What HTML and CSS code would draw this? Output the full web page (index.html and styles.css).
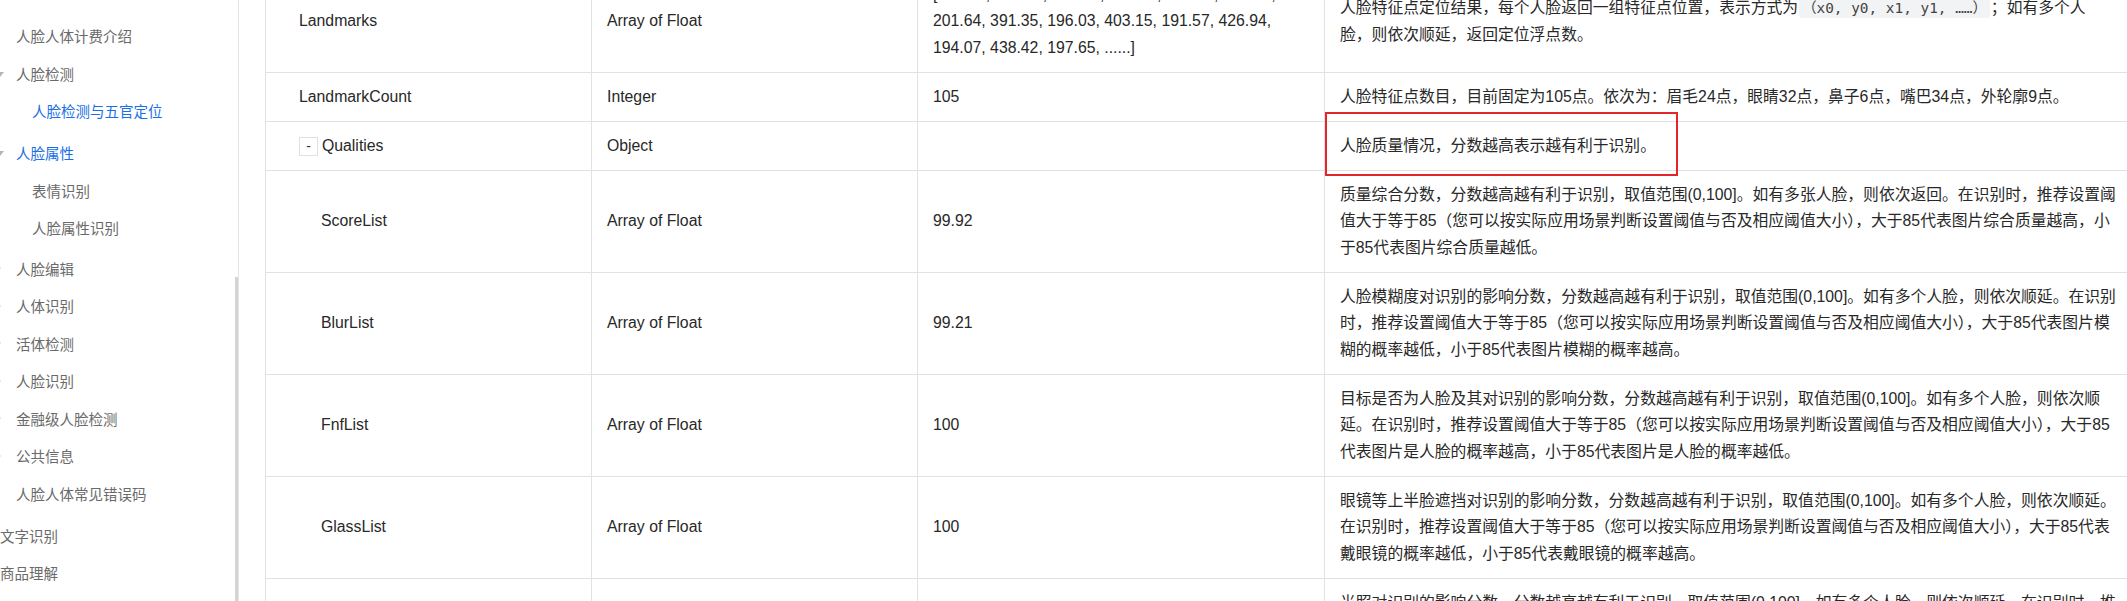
FILE: index.html
```html
<!DOCTYPE html>
<html lang="zh-CN">
<head>
<meta charset="utf-8">
<title>人脸检测与五官定位</title>
<link rel="stylesheet" href="styles.css">
</head>
<body>
<div class="page">
  <aside class="sidebar">
    <ul class="nav">
      <li class="nav-item l2"><span class="caret"></span><span>人脸人体计费介绍</span></li>
      <li class="nav-item l2"><span class="caret down"></span><span>人脸检测</span></li>
      <li class="nav-item l3 active group-end"><span>人脸检测与五官定位</span></li>
      <li class="nav-item l2 active"><span class="caret down"></span><span>人脸属性</span></li>
      <li class="nav-item l3"><span>表情识别</span></li>
      <li class="nav-item l3 group-end-s"><span>人脸属性识别</span></li>
      <li class="nav-item l2"><span class="caret right"></span><span>人脸编辑</span></li>
      <li class="nav-item l2"><span class="caret right"></span><span>人体识别</span></li>
      <li class="nav-item l2"><span class="caret right"></span><span>活体检测</span></li>
      <li class="nav-item l2"><span class="caret right"></span><span>人脸识别</span></li>
      <li class="nav-item l2"><span class="caret right"></span><span>金融级人脸检测</span></li>
      <li class="nav-item l2"><span class="caret right"></span><span>公共信息</span></li>
      <li class="nav-item l2 group-end"><span class="caret"></span><span>人脸人体常见错误码</span></li>
      <li class="nav-item l1"><span>文字识别</span></li>
      <li class="nav-item l1"><span>商品理解</span></li>
    </ul>
    <div class="scroll-thumb"></div>
  </aside>

  <main class="content">
    <div class="params">
      <div class="cell name first">Landmarks</div>
      <div class="cell">Array of Float</div>
      <div class="cell"><div class="text">[195.82, 381.64, 199.37, 394.15, 203.26, 407.83,<br>201.64, 391.35, 196.03, 403.15, 191.57, 426.94,<br>194.07, 438.42, 197.65, ......]</div></div>
      <div class="cell"><div class="text">人脸特征点定位结果，每个人脸返回一组特征点位置，表示方式为<code class="code">（x0, y0, x1, y1, ……）</code>；如有多个人<br>脸，则依次顺延，返回定位浮点数。</div></div>

      <div class="cell name first">LandmarkCount</div>
      <div class="cell">Integer</div>
      <div class="cell">105</div>
      <div class="cell"><div class="text">人脸特征点数目，目前固定为105点。依次为：眉毛24点，眼睛32点，鼻子6点，嘴巴34点，外轮廓9点。</div></div>

      <div class="cell name first toggle-cell"><span class="toggle">-</span><span>Qualities</span></div>
      <div class="cell">Object</div>
      <div class="cell"></div>
      <div class="cell marked"><div class="text">人脸质量情况，分数越高表示越有利于识别。</div><span class="mark-box"></span></div>

      <div class="cell name child first">ScoreList</div>
      <div class="cell">Array of Float</div>
      <div class="cell">99.92</div>
      <div class="cell"><div class="text">质量综合分数，分数越高越有利于识别，取值范围(0,100]。如有多张人脸，则依次返回。在识别时，推荐设置阈<br>值大于等于85（您可以按实际应用场景判断设置阈值与否及相应阈值大小），大于85代表图片综合质量越高，小<br>于85代表图片综合质量越低。</div></div>

      <div class="cell name child first">BlurList</div>
      <div class="cell">Array of Float</div>
      <div class="cell">99.21</div>
      <div class="cell"><div class="text">人脸模糊度对识别的影响分数，分数越高越有利于识别，取值范围(0,100]。如有多个人脸，则依次顺延。在识别<br>时，推荐设置阈值大于等于85（您可以按实际应用场景判断设置阈值与否及相应阈值大小），大于85代表图片模<br>糊的概率越低，小于85代表图片模糊的概率越高。</div></div>

      <div class="cell name child first">FnfList</div>
      <div class="cell">Array of Float</div>
      <div class="cell">100</div>
      <div class="cell"><div class="text">目标是否为人脸及其对识别的影响分数，分数越高越有利于识别，取值范围(0,100]。如有多个人脸，则依次顺<br>延。在识别时，推荐设置阈值大于等于85（您可以按实际应用场景判断设置阈值与否及相应阈值大小），大于85<br>代表图片是人脸的概率越高，小于85代表图片是人脸的概率越低。</div></div>

      <div class="cell name child first">GlassList</div>
      <div class="cell">Array of Float</div>
      <div class="cell">100</div>
      <div class="cell"><div class="text">眼镜等上半脸遮挡对识别的影响分数，分数越高越有利于识别，取值范围(0,100]。如有多个人脸，则依次顺延。<br>在识别时，推荐设置阈值大于等于85（您可以按实际应用场景判断设置阈值与否及相应阈值大小），大于85代表<br>戴眼镜的概率越低，小于85代表戴眼镜的概率越高。</div></div>

      <div class="cell name child first">IlluList</div>
      <div class="cell">Array of Float</div>
      <div class="cell">100</div>
      <div class="cell"><div class="text">光照对识别的影响分数，分数越高越有利于识别，取值范围(0,100]。如有多个人脸，则依次顺延。在识别时，推<br>荐设置阈值大于等于85（您可以按实际应用场景判断设置阈值与否及相应阈值大小），大于85代表图片光照越<br>好，小于85代表图片光照越差。</div></div>
    </div>
  </main>
</div>
</body>
</html>
```

FILE: styles.css
```css
* {
  box-sizing: border-box;
}

html, body {
  margin: 0;
  padding: 0;
  background: #ffffff;
  overflow: hidden;
}

body {
  width: 2127px;
  height: 601px;
  font-family: "Liberation Sans", "Noto Sans CJK SC", sans-serif;
}

.page {
  display: flex;
  height: 601px;
  overflow: hidden;
}

/* ---------- sidebar ---------- */
.sidebar {
  position: relative;
  flex: 0 0 239px;
  width: 239px;
  height: 601px;
  border-right: 1px solid #e4e4e4;
  overflow: hidden;
}

.nav {
  list-style: none;
  margin: 0;
  padding: 17px 0 0 0;
  font-family: "Noto Sans CJK SC", sans-serif;
  font-size: 14.5px;
  color: #6a6a6a;
}

.nav-item {
  display: flex;
  align-items: center;
  height: 37.5px;
  white-space: nowrap;
}

.nav-item.l1,
.nav-item.l2 {
  padding-left: 0;
}

.nav-item.l3 {
  padding-left: 32px;
}

.nav-item.active {
  color: #1a6fe6;
}

.nav-item.group-end {
  margin-bottom: 4.5px;
}

.nav-item.group-end-s {
  margin-bottom: 3px;
}

.caret {
  flex: 0 0 8px;
  width: 8px;
  height: 8px;
  margin-left: -4px;
  margin-right: 12px;
}

.caret.down {
  border-left: 4px solid transparent;
  border-right: 4px solid transparent;
  border-top: 5px solid #b4b4b4;
  height: 0;
  margin-top: 2px;
}

.caret.right {
  flex: 0 0 4px;
  width: 4px;
  height: 0;
  margin-left: -3px;
  margin-right: 15px;
  border-top: 3px solid transparent;
  border-bottom: 3px solid transparent;
  border-left: 4px solid #c4c4c4;
}

.scroll-thumb {
  position: absolute;
  left: 235px;
  top: 277px;
  width: 3px;
  bottom: 0;
  background: #d4d4d4;
}

/* ---------- content ---------- */
.content {
  flex: 1 1 auto;
  padding-left: 26px;
  overflow: hidden;
}

.params {
  display: grid;
  grid-template-columns: 327px 326px 407px 822px;
  width: 1882px;
  margin-top: -29px;
  font-size: 15.8px;
  line-height: 26.5px;
  color: #282828;
}

.cell {
  display: flex;
  align-items: center;
  padding: 10.75px 15px;
  border-right: 1px solid #e2e2e2;
  border-bottom: 1px solid #e2e2e2;
  white-space: nowrap;
}

.cell.first {
  border-left: 1px solid #e2e2e2;
}

.cell.name {
  padding-left: 33px;
}

.cell.name.child {
  padding-left: 55px;
}

.text {
  display: block;
}

.code {
  display: inline-block;
  font-family: "DejaVu Sans Mono", "Noto Sans CJK SC", monospace;
  font-size: 14.4px;
  line-height: 19px;
  padding: 0 3px;
  margin: 0 1px;
  background: #f2f3f5;
  border-radius: 3px;
  color: #444444;
}

.toggle {
  display: inline-flex;
  flex: 0 0 19px;
  align-items: center;
  justify-content: center;
  width: 19px;
  height: 19px;
  margin-right: 4px;
  border: 1px solid #e0e0e0;
  font-size: 14px;
  line-height: 1;
  color: #333333;
  background: #ffffff;
}

.marked {
  position: relative;
}

.mark-box {
  position: absolute;
  left: 0;
  top: -10px;
  width: 353px;
  height: 64px;
  border: 2px solid #e2262c;
  z-index: 2;
}
```
